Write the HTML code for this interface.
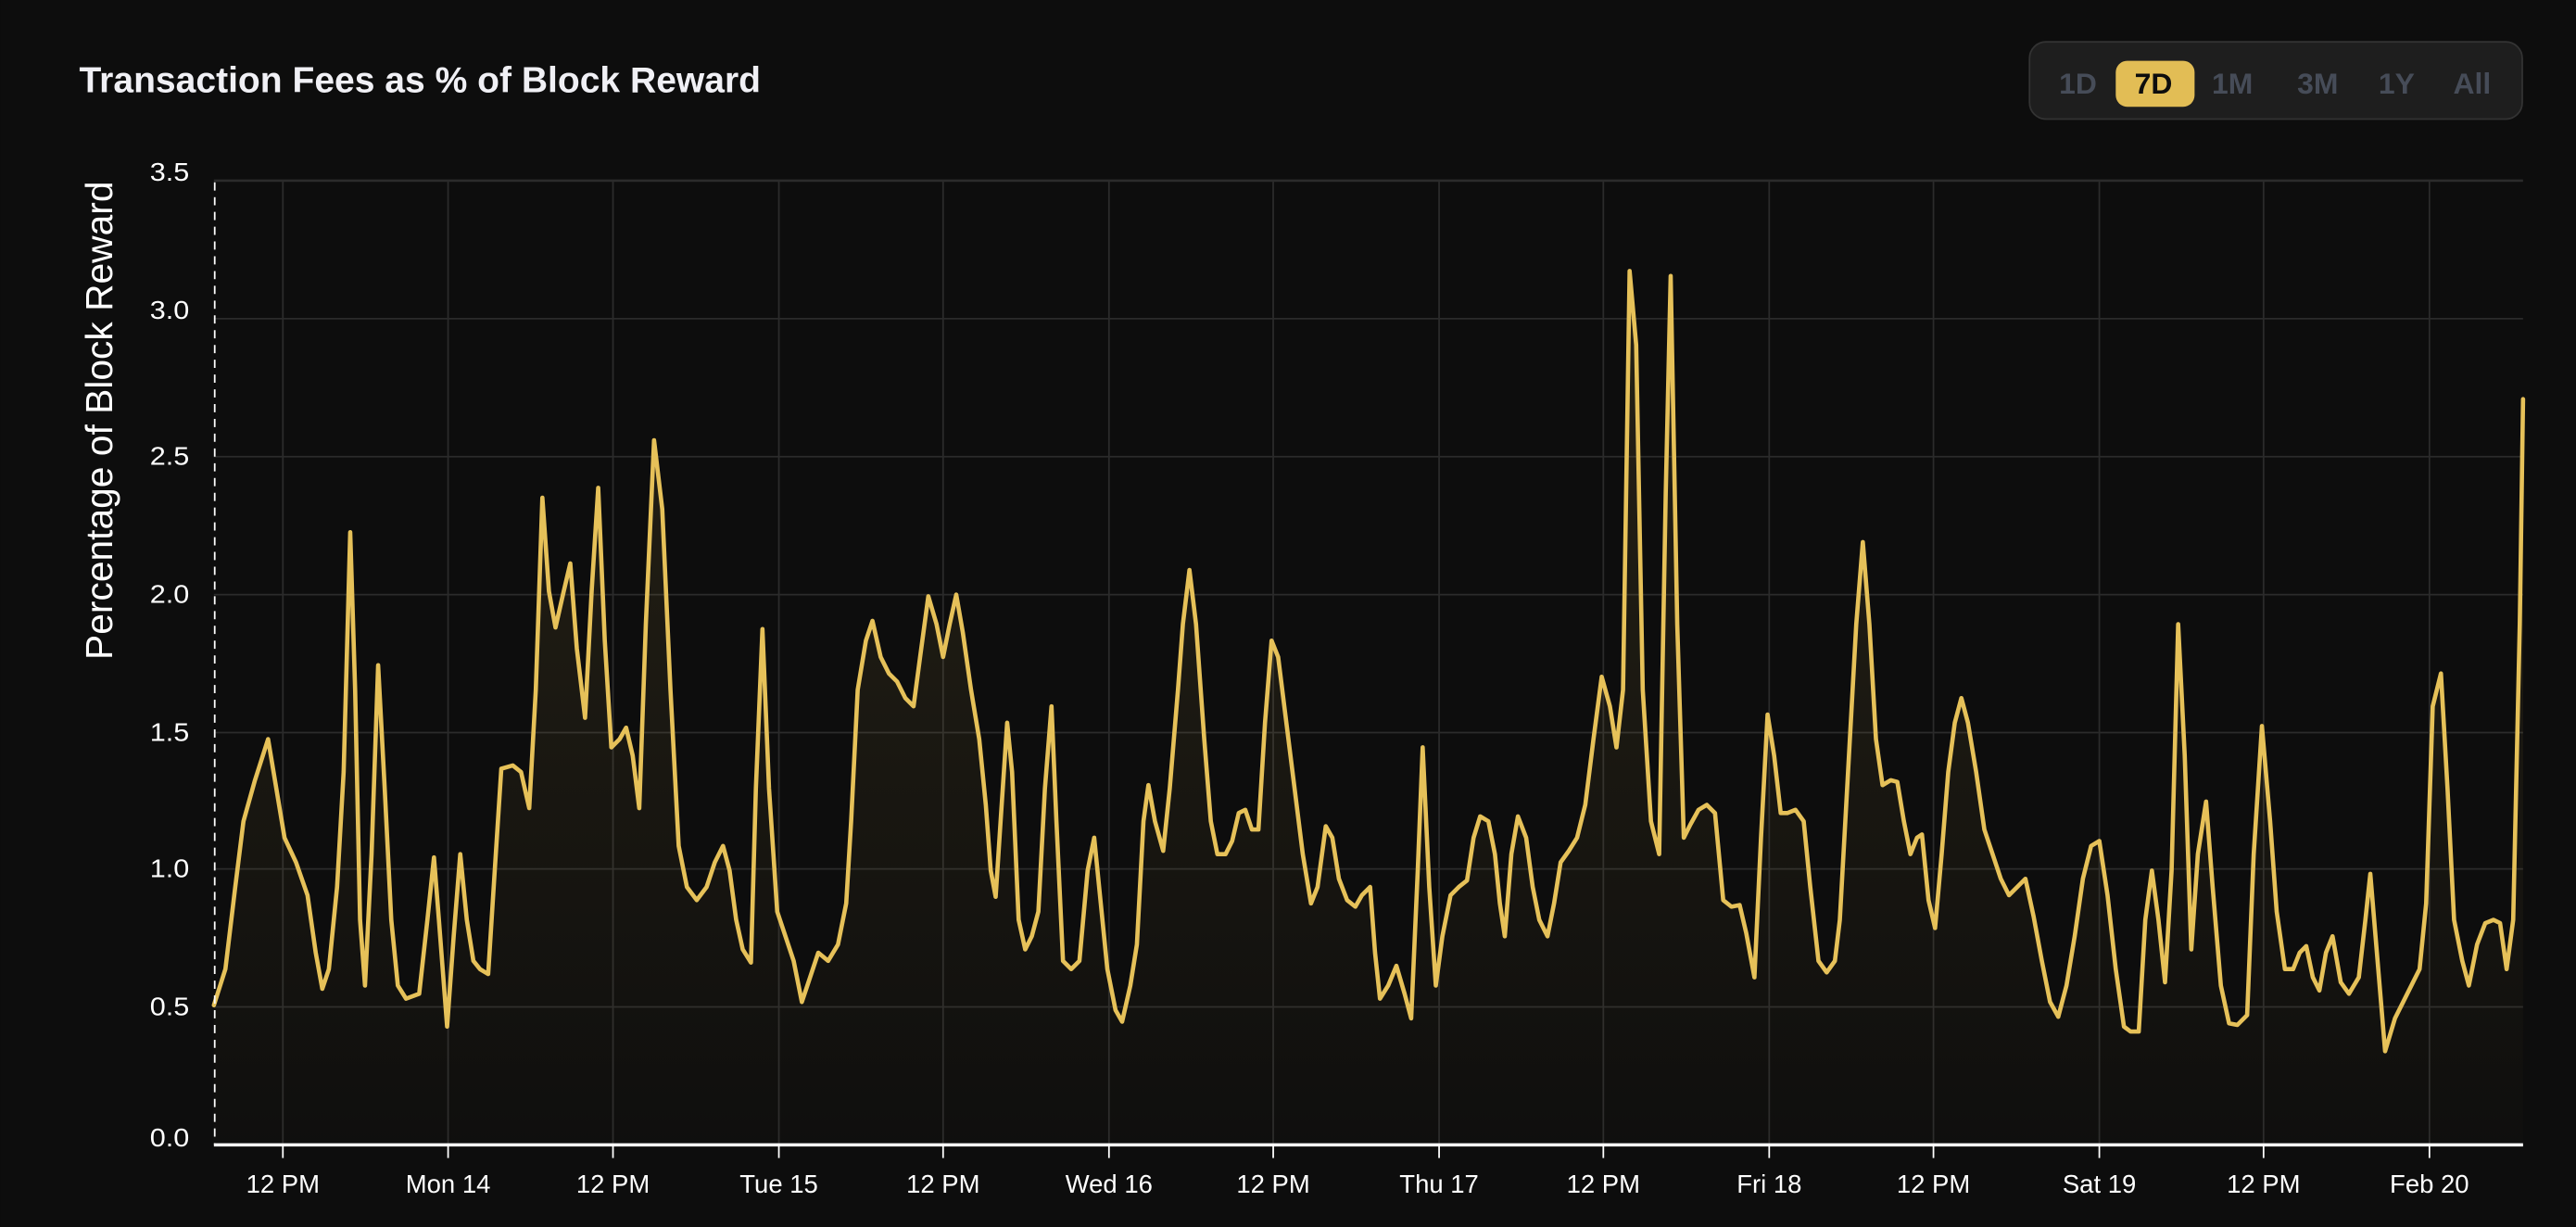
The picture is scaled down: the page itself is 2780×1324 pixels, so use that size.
<!DOCTYPE html>
<html><head><meta charset="utf-8"><style>
html,body{margin:0;padding:0;background:#0d0d0d;}
svg{display:block}
text{font-family:"Liberation Sans",sans-serif}
</style></head><body>
<svg width="2780" height="1324" viewBox="0 0 1568 747" xmlns="http://www.w3.org/2000/svg">
<defs>
<linearGradient id="g" x1="0" y1="0" x2="0" y2="1">
<stop offset="0" stop-color="#e2bd55" stop-opacity="0.12"/>
<stop offset="1" stop-color="#e2bd55" stop-opacity="0.01"/>
</linearGradient>
</defs>
<rect width="1568" height="747" fill="#0d0d0d"/>
<text x="48" y="56" font-size="22" font-weight="bold" fill="#f0f0f5" textLength="415" lengthAdjust="spacingAndGlyphs">Transaction Fees as % of Block Reward</text>
<rect x="1235.5" y="25.5" width="300" height="47" rx="10" fill="#1e1e1e" stroke="#333" stroke-width="1"/>
<rect x="1288" y="37" width="48" height="28" rx="7" fill="#e2bd55"/>
<g font-size="18" font-weight="bold" text-anchor="middle" fill="#464c58">
<text x="1265" y="57">1D</text>
<text x="1311" y="57" fill="#0d0d0d">7D</text>
<text x="1359" y="57">1M</text>
<text x="1411" y="57">3M</text>
<text x="1459" y="57">1Y</text>
<text x="1505" y="57">All</text>
</g>
<g stroke="#2b2b2b" stroke-width="1">
<line x1="130" y1="110" x2="1536" y2="110" stroke-width="1.5"/>
<line x1="130" y1="194" x2="1536" y2="194"/>
<line x1="130" y1="278" x2="1536" y2="278"/>
<line x1="130" y1="362" x2="1536" y2="362"/>
<line x1="130" y1="446" x2="1536" y2="446"/>
<line x1="130" y1="529" x2="1536" y2="529"/>
<line x1="130" y1="613" x2="1536" y2="613"/>
<line x1="172" y1="110" x2="172" y2="697"/><line x1="272.6" y1="110" x2="272.6" y2="697"/><line x1="373" y1="110" x2="373" y2="697"/><line x1="474" y1="110" x2="474" y2="697"/><line x1="574" y1="110" x2="574" y2="697"/><line x1="675" y1="110" x2="675" y2="697"/><line x1="775" y1="110" x2="775" y2="697"/><line x1="876" y1="110" x2="876" y2="697"/><line x1="976" y1="110" x2="976" y2="697"/><line x1="1077" y1="110" x2="1077" y2="697"/><line x1="1177" y1="110" x2="1177" y2="697"/><line x1="1278" y1="110" x2="1278" y2="697"/><line x1="1378" y1="110" x2="1378" y2="697"/><line x1="1479" y1="110" x2="1479" y2="697"/>
</g>
<polygon fill="url(#g)" points="130,697 130,612 137,590 143,540 148,500 155,475 163,450 168,480 173,510 180,525 187,545 192,580 196,602 200,590 205,540 209,470 213,324 216,420 219,560 222,600 226,520 230,405 234,480 238,560 242,600 247,608 255,605 260,560 264,522 267,560 272,625 276,570 280,520 284,560 288,585 292,590 297,593 301,530 305,468 312,466 317,470 322,492 326,420 330,303 334,360 338,382 343,360 347,343 351,395 356,437 360,360 364,297 368,390 372,455 377,450 381,443 385,460 389,492 393,380 398,268 403,310 408,420 413,515 418,540 424,548 430,540 435,525 440,515 444,530 448,560 452,578 457,586 460,480 464,383 468,480 473,555 478,570 483,585 488,610 493,595 498,580 504,585 510,575 515,550 518,500 522,420 527,390 531,378 536,400 541,410 546,415 551,425 556,430 560,400 565,363 570,380 574,400 578,380 582,362 586,385 591,420 596,450 600,490 603,530 606,546 609,500 613,440 616,470 620,560 624,578 628,570 632,555 636,480 640,430 643,500 647,585 652,590 657,585 662,530 666,510 670,550 674,590 679,615 683,622 688,600 692,575 696,500 699,478 703,500 708,518 712,480 717,420 720,380 724,347 728,380 733,450 737,500 741,520 746,520 750,512 754,495 758,493 762,505 766,505 770,440 774,390 778,400 783,440 788,480 793,520 798,550 802,540 807,503 811,510 815,535 820,548 825,552 829,545 834,540 837,580 840,608 845,600 850,588 855,605 859,620 863,530 866,455 870,540 874,600 878,570 883,545 888,540 893,536 897,510 901,497 906,500 910,520 913,550 916,570 920,520 924,497 929,510 933,540 937,560 942,570 946,550 950,525 955,518 960,510 965,490 970,450 975,412 980,430 984,455 988,420 992,165 996,210 1000,420 1005,500 1010,520 1014,300 1017,168 1021,380 1025,510 1029,502 1034,493 1039,490 1044,495 1049,548 1054,552 1059,551 1063,568 1068,595 1072,510 1076,435 1080,460 1084,495 1088,495 1093,493 1098,500 1102,540 1107,585 1112,592 1117,585 1120,560 1125,470 1130,380 1134,330 1138,380 1142,450 1146,478 1151,475 1155,476 1159,500 1163,520 1167,510 1170,508 1174,548 1178,565 1182,520 1186,470 1190,440 1194,425 1198,440 1203,470 1208,505 1213,520 1218,535 1223,545 1228,540 1233,535 1238,558 1243,585 1248,610 1253,619 1258,600 1263,570 1268,535 1273,515 1278,512 1283,545 1288,590 1293,625 1297,628 1302,628 1306,560 1310,530 1314,560 1318,598 1322,530 1326,380 1330,460 1334,578 1338,520 1343,488 1347,540 1352,600 1357,623 1362,624 1368,618 1372,520 1377,442 1382,500 1386,555 1391,590 1396,590 1400,580 1404,576 1408,595 1412,603 1416,580 1420,570 1425,598 1430,605 1436,595 1440,560 1443,532 1447,580 1452,640 1458,620 1463,610 1468,600 1473,590 1477,550 1481,430 1486,410 1490,480 1494,560 1499,585 1503,600 1508,575 1513,562 1518,560 1522,562 1526,590 1530,560 1534,380 1536,243 1536,697"/>
<polyline fill="none" stroke="#e6c159" stroke-width="2.6" stroke-linejoin="round" stroke-linecap="round" points="130,612 137,590 143,540 148,500 155,475 163,450 168,480 173,510 180,525 187,545 192,580 196,602 200,590 205,540 209,470 213,324 216,420 219,560 222,600 226,520 230,405 234,480 238,560 242,600 247,608 255,605 260,560 264,522 267,560 272,625 276,570 280,520 284,560 288,585 292,590 297,593 301,530 305,468 312,466 317,470 322,492 326,420 330,303 334,360 338,382 343,360 347,343 351,395 356,437 360,360 364,297 368,390 372,455 377,450 381,443 385,460 389,492 393,380 398,268 403,310 408,420 413,515 418,540 424,548 430,540 435,525 440,515 444,530 448,560 452,578 457,586 460,480 464,383 468,480 473,555 478,570 483,585 488,610 493,595 498,580 504,585 510,575 515,550 518,500 522,420 527,390 531,378 536,400 541,410 546,415 551,425 556,430 560,400 565,363 570,380 574,400 578,380 582,362 586,385 591,420 596,450 600,490 603,530 606,546 609,500 613,440 616,470 620,560 624,578 628,570 632,555 636,480 640,430 643,500 647,585 652,590 657,585 662,530 666,510 670,550 674,590 679,615 683,622 688,600 692,575 696,500 699,478 703,500 708,518 712,480 717,420 720,380 724,347 728,380 733,450 737,500 741,520 746,520 750,512 754,495 758,493 762,505 766,505 770,440 774,390 778,400 783,440 788,480 793,520 798,550 802,540 807,503 811,510 815,535 820,548 825,552 829,545 834,540 837,580 840,608 845,600 850,588 855,605 859,620 863,530 866,455 870,540 874,600 878,570 883,545 888,540 893,536 897,510 901,497 906,500 910,520 913,550 916,570 920,520 924,497 929,510 933,540 937,560 942,570 946,550 950,525 955,518 960,510 965,490 970,450 975,412 980,430 984,455 988,420 992,165 996,210 1000,420 1005,500 1010,520 1014,300 1017,168 1021,380 1025,510 1029,502 1034,493 1039,490 1044,495 1049,548 1054,552 1059,551 1063,568 1068,595 1072,510 1076,435 1080,460 1084,495 1088,495 1093,493 1098,500 1102,540 1107,585 1112,592 1117,585 1120,560 1125,470 1130,380 1134,330 1138,380 1142,450 1146,478 1151,475 1155,476 1159,500 1163,520 1167,510 1170,508 1174,548 1178,565 1182,520 1186,470 1190,440 1194,425 1198,440 1203,470 1208,505 1213,520 1218,535 1223,545 1228,540 1233,535 1238,558 1243,585 1248,610 1253,619 1258,600 1263,570 1268,535 1273,515 1278,512 1283,545 1288,590 1293,625 1297,628 1302,628 1306,560 1310,530 1314,560 1318,598 1322,530 1326,380 1330,460 1334,578 1338,520 1343,488 1347,540 1352,600 1357,623 1362,624 1368,618 1372,520 1377,442 1382,500 1386,555 1391,590 1396,590 1400,580 1404,576 1408,595 1412,603 1416,580 1420,570 1425,598 1430,605 1436,595 1440,560 1443,532 1447,580 1452,640 1458,620 1463,610 1468,600 1473,590 1477,550 1481,430 1486,410 1490,480 1494,560 1499,585 1503,600 1508,575 1513,562 1518,560 1522,562 1526,590 1530,560 1534,380 1536,243"/>
<line x1="130.5" y1="111" x2="130.5" y2="697" stroke="#fff" stroke-width="1" stroke-dasharray="5,4"/>
<line x1="130" y1="697" x2="1536" y2="697" stroke="#fff" stroke-width="2"/>
<g stroke="#fff" stroke-width="1">
<line x1="172" y1="697" x2="172" y2="705"/><line x1="272.6" y1="697" x2="272.6" y2="705"/><line x1="373" y1="697" x2="373" y2="705"/><line x1="474" y1="697" x2="474" y2="705"/><line x1="574" y1="697" x2="574" y2="705"/><line x1="675" y1="697" x2="675" y2="705"/><line x1="775" y1="697" x2="775" y2="705"/><line x1="876" y1="697" x2="876" y2="705"/><line x1="976" y1="697" x2="976" y2="705"/><line x1="1077" y1="697" x2="1077" y2="705"/><line x1="1177" y1="697" x2="1177" y2="705"/><line x1="1278" y1="697" x2="1278" y2="705"/><line x1="1378" y1="697" x2="1378" y2="705"/><line x1="1479" y1="697" x2="1479" y2="705"/>
</g>
<g font-size="15.5" fill="#fff" text-anchor="end">
<text x="115" y="110" textLength="24" lengthAdjust="spacingAndGlyphs">3.5</text>
<text x="115" y="194" textLength="24" lengthAdjust="spacingAndGlyphs">3.0</text>
<text x="115" y="283" textLength="24" lengthAdjust="spacingAndGlyphs">2.5</text>
<text x="115" y="367" textLength="24" lengthAdjust="spacingAndGlyphs">2.0</text>
<text x="115" y="451" textLength="24" lengthAdjust="spacingAndGlyphs">1.5</text>
<text x="115" y="534" textLength="24" lengthAdjust="spacingAndGlyphs">1.0</text>
<text x="115" y="618" textLength="24" lengthAdjust="spacingAndGlyphs">0.5</text>
<text x="115" y="698" textLength="24" lengthAdjust="spacingAndGlyphs">0.0</text>
</g>
<g font-size="15.5" fill="#fff" text-anchor="middle">
<text x="172" y="726">12 PM</text><text x="272.6" y="726">Mon 14</text><text x="373" y="726">12 PM</text><text x="474" y="726">Tue 15</text><text x="574" y="726">12 PM</text><text x="675" y="726">Wed 16</text><text x="775" y="726">12 PM</text><text x="876" y="726">Thu 17</text><text x="976" y="726">12 PM</text><text x="1077" y="726">Fri 18</text><text x="1177" y="726">12 PM</text><text x="1278" y="726">Sat 19</text><text x="1378" y="726">12 PM</text><text x="1479" y="726">Feb 20</text>
</g>
<text transform="translate(68,256) rotate(-90)" font-size="23" fill="#fff" text-anchor="middle">Percentage of Block Reward</text>
</svg>
</body></html>
